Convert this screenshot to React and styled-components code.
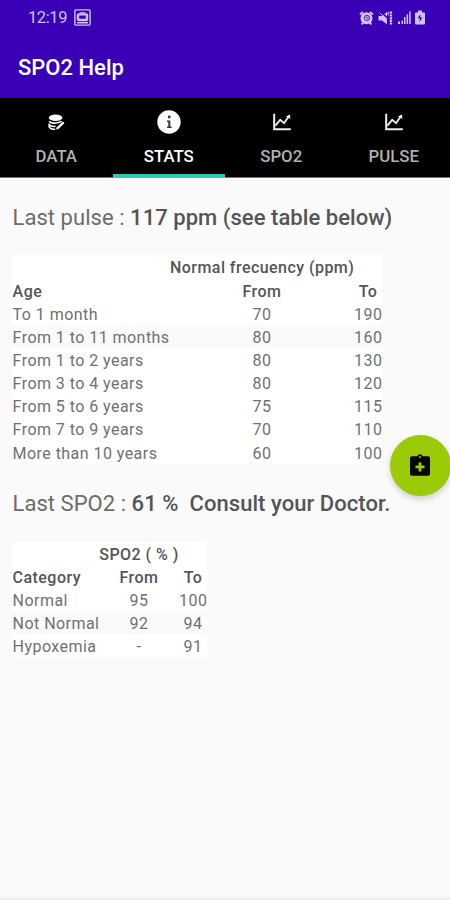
import styled, { createGlobalStyle } from "styled-components";

const GlobalStyle = createGlobalStyle`
  * {
    box-sizing: border-box;
  }

  body {
    margin: 0;
    font-family: Roboto, sans-serif;
    background-color: #fafafa;
    color: #6c6c6c;
  }
`;

const Screen = styled.div`
  position: relative;
  width: 450px;
  height: 900px;
  display: flex;
  flex-direction: column;
  overflow: hidden;
  background-color: #fafafa;
`;

const TopBar = styled.header`
  height: 98px;
  background-color: #3a00b5;
  color: #fff;
`;

const StatusBar = styled.div`
  display: flex;
  justify-content: space-between;
  align-items: center;
  height: 35px;
  padding: 0 25px 0 28px;
`;

const StatusGroup = styled.div`
  display: flex;
  align-items: center;
  gap: ${(props) => props.$gap};
  color: #cfc2f2;

  svg {
    display: block;
  }
`;

const Clock = styled.span`
  width: 40px;
  padding-top: 1px;
  font-size: 16.5px;
  line-height: 20px;
  letter-spacing: -0.4px;
`;

const Title = styled.h1`
  margin: 0;
  padding: 19px 0 0 18px;
  font-size: 22px;
  line-height: 28px;
  font-weight: 500;
`;

const Tabs = styled.nav`
  display: grid;
  grid-template-columns: repeat(4, 1fr);
  height: 80px;
  background-color: #000;
`;

const Tab = styled.div`
  display: flex;
  flex-direction: column;
  align-items: center;
  border-bottom: ${(props) => (props.$active ? "4px solid #2fc9b5" : "1px solid #777")};
  color: ${(props) => (props.$active ? "#fff" : "#b0b0b0")};
  font-size: 16.8px;
  font-weight: 500;
  line-height: 20px;
`;

const IconSlot = styled.div`
  display: flex;
  align-items: center;
  justify-content: center;
  height: 48px;
  padding-left: 1px;
  color: #fff;
`;

const Content = styled.main`
  padding: 27px 0 0 12px;
`;

const Reading = styled.p`
  margin: 0;
  padding-left: 0.5px;
  font-size: 22px;
  line-height: 26px;
  white-space: pre;
  letter-spacing: 0.05px;

  strong {
    font-weight: 500;
    color: #555;
  }
`;

const StyledTable = styled.div`
  width: max-content;
  margin: ${(props) => props.$margin};
  font-size: 16px;
  letter-spacing: 0.45px;
  background-color: #fff;
`;

const Row = styled.div`
  display: grid;
  grid-template-columns: ${(props) => props.$columns};
  height: 23.15px;
  line-height: 25px;
  white-space: pre;
  text-align: center;
  font-weight: ${(props) => (props.$head ? 500 : 400)};
  color: ${(props) => (props.$head ? "#555" : "#707070")};
  background-color: ${(props) => (props.$shaded ? "#fafafa" : "#fff")};

  span:first-child {
    padding-left: 0.6px;
    text-align: left;
  }
`;

const Fab = styled.button`
  position: absolute;
  top: 435px;
  left: 389.5px;
  display: flex;
  align-items: center;
  justify-content: center;
  width: 61px;
  height: 61px;
  padding: 0 1px 2px 0;
  border: none;
  border-radius: 50%;
  background-color: #9bca06;
  box-shadow: 0 3px 6px rgba(0, 0, 0, 0.18);
`;

const BottomEdge = styled.div`
  height: 4px;
  margin-top: auto;
  background: linear-gradient(#f8f8f8, #ececec);
`;

const pulseRows = [
  ["To 1 month", "70", "190"],
  ["From 1 to 11 months", "80", "160"],
  ["From 1 to 2 years", "80", "130"],
  ["From 3 to 4 years", "80", "120"],
  ["From 5 to 6 years", "75", "115"],
  ["From 7 to 9 years", "70", "110"],
  ["More than 10 years", "60", "100"],
];

const spo2Rows = [
  ["Normal", "95", "100"],
  ["Not Normal", "92", "94"],
  ["Hypoxemia", "-", "91"],
];

function ScreenshotIcon() {
  return (
    <svg width="17" height="17" viewBox="0 0 17 17" fill="none" stroke="currentColor">
      <rect x="0.9" y="0.9" width="15.2" height="15.2" rx="1" strokeWidth="1.4" />
      <rect x="4" y="5.4" width="9" height="5.6" rx="0.8" strokeWidth="2.4" />
      <path d="M5.6 3.9h5.8M3 13.8h11" strokeWidth="1.4" />
    </svg>
  );
}

function AlarmIcon() {
  return (
    <svg width="15" height="14" viewBox="0 0 15 14">
      <path d="M1 3.6 4 1M14 3.6 11 1M2.6 13.4l2-2.2M12.4 13.4l-2-2.2" stroke="currentColor" strokeWidth="2" />
      <circle cx="7.5" cy="7.3" r="6" fill="currentColor" />
      <circle cx="7.9" cy="6.9" r="2.6" fill="none" stroke="#3a00b5" strokeWidth="0.9" />
      <path d="M7.9 5.4v1.8h1.4" fill="none" stroke="#3a00b5" strokeWidth="0.8" />
    </svg>
  );
}

function MuteIcon() {
  return (
    <svg width="15" height="14" viewBox="0 0 15 14">
      <path d="M.5 5h3L9 1v12.5L4 9.5H.5z" fill="currentColor" />
      <path d="M2.8.6 9.4 7" stroke="#3a00b5" strokeWidth="1.5" />
      <path d="M1.8 1.6 8 8.4" stroke="currentColor" strokeWidth="1" />
      <path d="M10.2.8v3.4" stroke="currentColor" strokeWidth="1.2" />
      <path d="M12.9.6v13" stroke="currentColor" strokeWidth="2.4" strokeDasharray="2.2 0.6" />
    </svg>
  );
}

function SignalIcon() {
  return (
    <svg width="13" height="13" viewBox="0 0 13 13" fill="currentColor">
      <path d="M0 10.5h2V13H0zM3.5 9.5H5V13H3.5zM6 6h1.5v7H6zM8.6 3.2h1.5V13H8.6zM11.2.5h1.5V13h-1.5z" />
    </svg>
  );
}

function BatteryIcon() {
  return (
    <svg width="10" height="15" viewBox="0 0 10 15">
      <path d="M3 .5h4v2h2q1 0 1 1v10q0 1-1 1H1q-1 0-1-1v-10q0-1 1-1h2z" fill="currentColor" />
      <path d="M5.4 4 2.8 8.3h2L4.6 12l2.7-4.6h-2z" fill="#2b1060" />
    </svg>
  );
}

function DataIcon() {
  return (
    <svg width="17" height="17" viewBox="0 0 17 17" fill="none" stroke="currentColor">
      <ellipse cx="7.6" cy="3.8" rx="6.8" ry="3.2" fill="currentColor" stroke="none" />
      <path d="M1.2 7.2c1.2 1.7 4.5 2 6.6 1.8 2-.1 4.3-.5 5.6-2" strokeWidth="1.6" />
      <path d="M1.2 9.4v3.4c1 2 4 2.5 6 2.5M1.5 11.2c1.6 1.3 4 1.4 6 1.1" strokeWidth="1.6" />
      <path d="m8 15.6.8-2.4 6-5.6 1.7 1.5-6 5.8z" fill="currentColor" stroke="none" />
    </svg>
  );
}

function InfoIcon() {
  return (
    <svg width="24" height="24" viewBox="0 0 24 24">
      <circle cx="12" cy="12" r="11.7" fill="#fff" />
      <circle cx="12.2" cy="7" r="1.4" fill="#333" />
      <path d="M10 10.4h3.3v6h1.3V18H10v-1.6h1.3V12H10z" fill="#333" />
    </svg>
  );
}

function ChartIcon() {
  return (
    <svg width="18" height="18" viewBox="0 0 18 18" fill="none" stroke="#eee" strokeWidth="1.8">
      <path d="M1.2.8v15.4h16.6" strokeWidth="2" />
      <path d="m2.4 12.6 4.8-5.7 3.8 3.3 5.4-7.6" />
      <path d="M12.9 3.4 17.2 1.6v4.4z" fill="#eee" stroke="none" />
    </svg>
  );
}

function ClipboardIcon() {
  return (
    <svg width="20" height="22" viewBox="0 0 20 22">
      <path d="M2 2.2h5.2a3 3 0 0 1 5.6 0H18q2 0 2 2v15.6q0 2-2 2H2q-2 0-2-2V4.2q0-2 2-2z" fill="#050700" />
      <circle cx="10" cy="3" r="1" fill="#9bca06" />
      <path d="M10 8.4v9M5.5 12.9h9" stroke="#9bca06" strokeWidth="2.8" />
    </svg>
  );
}

const tabs = [
  { label: "DATA", icon: <DataIcon /> },
  { label: "STATS", icon: <InfoIcon />, active: true },
  { label: "SPO2", icon: <ChartIcon /> },
  { label: "PULSE", icon: <ChartIcon /> },
];

function Table({ caption, label, columns, rows, margin }) {
  return (
    <StyledTable role="table" $margin={margin}>
      <Row $columns={columns} $head>
        <span />
        <span>{caption}</span>
        <span />
      </Row>
      <Row $columns={columns} $head>
        <span>{label}</span>
        <span>From</span>
        <span>To</span>
      </Row>
      {rows.map(([name, from, to], i) => (
        <Row key={name} $columns={columns} $shaded={i === 1}>
          <span>{name}</span>
          <span>{from}</span>
          <span>{to}</span>
        </Row>
      ))}
    </StyledTable>
  );
}

function App() {
  return (
    <Screen>
      <GlobalStyle />
      <TopBar>
        <StatusBar>
          <StatusGroup $gap="6px">
            <Clock>12:19</Clock>
            <ScreenshotIcon />
          </StatusGroup>
          <StatusGroup $gap="4.5px">
            <AlarmIcon />
            <MuteIcon />
            <SignalIcon />
            <BatteryIcon />
          </StatusGroup>
        </StatusBar>
        <Title>SPO2 Help</Title>
      </TopBar>
      <Tabs>
        {tabs.map((tab) => (
          <Tab key={tab.label} $active={tab.active}>
            <IconSlot>{tab.icon}</IconSlot>
            {tab.label}
          </Tab>
        ))}
      </Tabs>
      <Content>
        <Reading>
          Last pulse : <strong>117 ppm (see table below)</strong>
        </Reading>
        <Table
          caption="Normal frecuency (ppm)"
          label="Age"
          columns="158px 184px 28px"
          rows={pulseRows}
          margin="24.4px 0 27.4px"
        />
        <Reading>
          Last SPO2 : <strong>61 %{"  "}Consult your Doctor.</strong>
        </Reading>
        <Table
          caption="SPO2 ( % )"
          label="Category"
          columns="87px 80px 28px"
          rows={spo2Rows}
          margin="24.7px 0 0"
        />
      </Content>
      <Fab aria-label="Add reading">
        <ClipboardIcon />
      </Fab>
      <BottomEdge />
    </Screen>
  );
}

export default App;
